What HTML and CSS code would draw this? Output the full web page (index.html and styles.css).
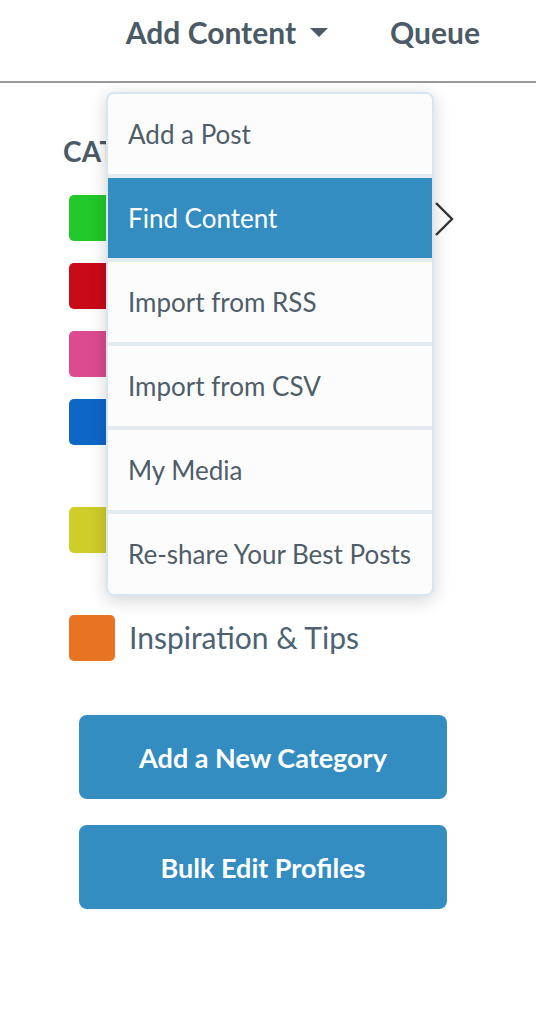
FILE: index.html
```html
<!DOCTYPE html>
<html>
<head>
<meta charset="utf-8">
<link rel="stylesheet" href="styles.css">
</head>
<body>
<header class="topnav">
  <div class="nav-item nav-add">Add Content
    <svg class="caret" width="18" height="9" viewBox="0 0 18 9"><path d="M0 0H18L9 9Z" fill="#4a5a66"/></svg>
  </div>
  <div class="nav-item">Queue</div>
</header>
<main class="page">
  <h2 class="heading">CATEGORIES</h2>
  <ul class="cats">
    <li class="cat"><span class="swatch green"></span>
      <svg class="chev" width="20" height="36" viewBox="0 0 20 36"><path d="M2 2L18 18L2 34" fill="none" stroke="#333" stroke-width="2.4"/></svg>
    </li>
    <li class="cat"><span class="swatch red"></span></li>
    <li class="cat"><span class="swatch pink"></span></li>
    <li class="cat tall"><span class="swatch blue"></span></li>
    <li class="cat tall"><span class="swatch yellow"></span></li>
    <li class="cat"><span class="swatch orange"></span><span class="label">Inspiration &amp; Tips</span></li>
  </ul>
  <div class="actions">
    <button class="btn">Add a New Category</button>
    <button class="btn">Bulk Edit Profiles</button>
  </div>
</main>
<div class="dropdown">
  <div class="dd-item">Add a Post</div>
  <div class="dd-item active">Find Content</div>
  <div class="dd-item">Import from RSS</div>
  <div class="dd-item">Import from CSV</div>
  <div class="dd-item">My Media</div>
  <div class="dd-item">Re-share Your Best Posts</div>
</div>
</body>
</html>
```
FILE: styles.css
```css
* { box-sizing: border-box; }
html, body { margin: 0; padding: 0; }
body {
  width: 536px;
  height: 1016px;
  background: #fff;
  font-family: Lato, "Liberation Sans", sans-serif;
  color: #4a5a66;
  position: relative;
  overflow: hidden;
}
.topnav {
  height: 83px;
  border-bottom: 2px solid #999;
  display: flex;
  justify-content: flex-end;
  align-items: center;
  padding: 0 56px 17px 0;
  gap: 62px;
}
.nav-item {
  font-size: 30px;
  font-weight: 700;
  color: #4a5a66;
  display: flex;
  align-items: center;
}
.caret { margin-left: 14px; }
.page { padding: 52px 0 0 63px; }
.heading {
  margin: 0 0 28px;
  font-size: 28px;
  font-weight: 700;
  letter-spacing: 0.3px;
  color: #4a5a66;
  line-height: 32px;
}
.cats {
  list-style: none;
  margin: 0;
  padding: 0 0 0 6px;
  width: 391px;
}
.cat {
  display: flex;
  align-items: flex-start;
  height: 68px;
}
.cat.tall { height: 108px; }
.swatch {
  width: 46px;
  height: 46px;
  border-radius: 5px;
  flex: none;
}
.green { background: #22c92a; }
.red { background: #c90a18; }
.pink { background: #dc4a8f; }
.blue { background: #0e67c6; }
.yellow { background: #cfcd2a; }
.orange { background: #e87422; }
.label {
  margin-left: 14px;
  font-size: 30px;
  line-height: 44px;
  color: #4c6374;
}
.chev { margin-left: auto; margin-top: 6px; }
.actions {
  display: flex;
  flex-direction: column;
  gap: 26px;
  padding: 32px 0 0 16px;
}
.btn {
  width: 368px;
  height: 84px;
  border: none;
  border-radius: 8px;
  background: #338dc1;
  color: #fff;
  font-family: Lato, "Liberation Sans", sans-serif;
  font-size: 27px;
  font-weight: 700;
}
.dropdown {
  position: absolute;
  left: 106px;
  top: 92px;
  width: 328px;
  background: #e4ebf1;
  border: 2px solid #d6e7f2;
  border-radius: 8px;
  box-shadow: 0 4px 18px rgba(0,0,0,0.18);
  display: flex;
  flex-direction: column;
  gap: 4px;
  overflow: hidden;
}
.dd-item {
  height: 80px;
  background: #fcfcfc;
  display: flex;
  align-items: center;
  padding-left: 20px;
  font-size: 26px;
  color: #4e5d69;
}
.dd-item.active {
  background: #338dc1;
  color: #fff;
}
```
